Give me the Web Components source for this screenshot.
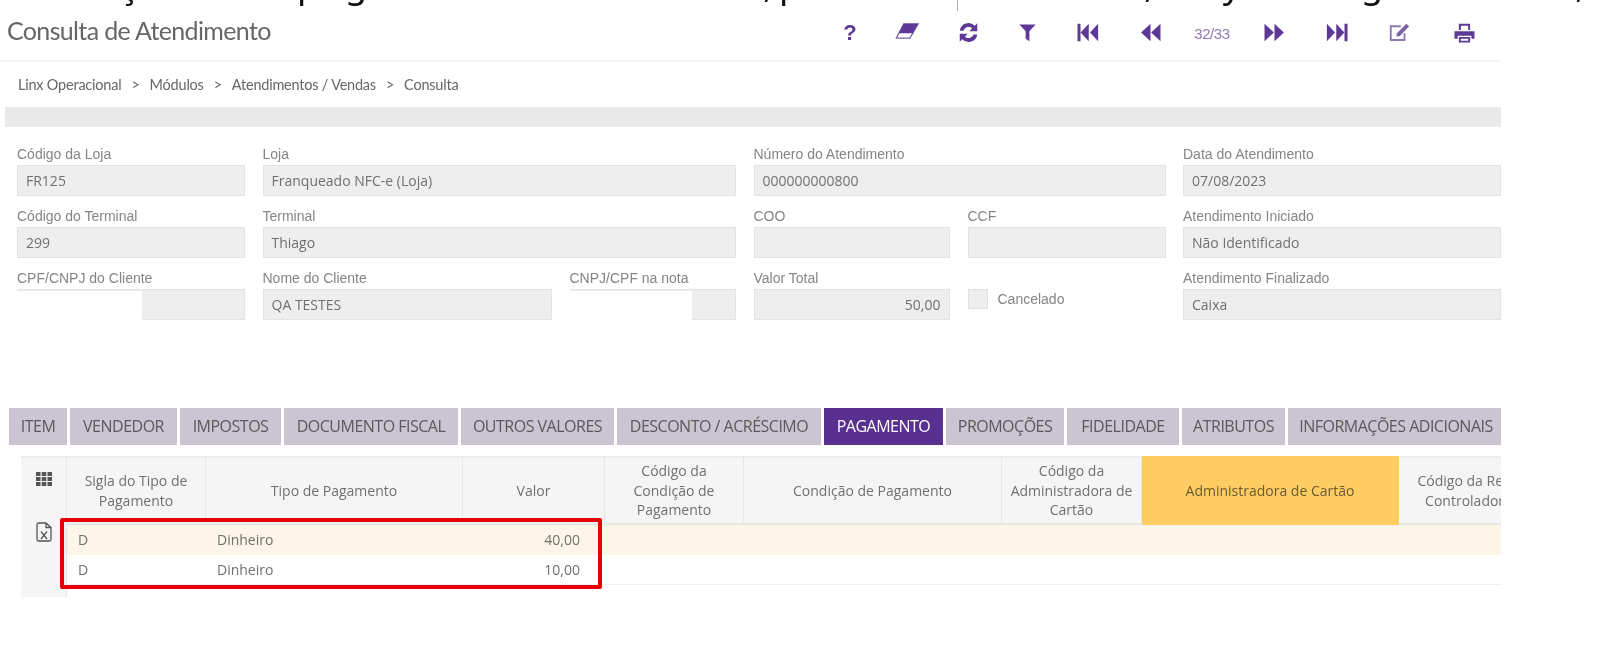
<!DOCTYPE html>
<html lang="pt-BR">
<head>
<meta charset="utf-8">
<title>Consulta de Atendimento</title>
<style>
  html, body { margin: 0; background: #fff; }
  body { width: 1612px; height: 645px; overflow: hidden; font-family: "Liberation Sans", sans-serif; filter: blur(.4px); }
</style>
</head>
<body>
<slide-strip></slide-strip>
<page-header title="Consulta de Atendimento"></page-header>
<bread-crumb path="Linx Operacional|Módulos|Atendimentos / Vendas|Consulta"></bread-crumb>
<grey-bar></grey-bar>
<attendance-form>
  <form-field label="Código da Loja" value="FR125"></form-field>
  <form-field label="Loja" value="Franqueado NFC-e (Loja)"></form-field>
  <form-field label="Número do Atendimento" value="000000000800"></form-field>
  <form-field label="Data do Atendimento" value="07/08/2023"></form-field>

  <form-field label="Código do Terminal" value="299"></form-field>
  <form-field label="Terminal" value="Thiago"></form-field>
  <field-pair style="--cols: 196px 198px">
    <form-field label="COO" value=""></form-field>
    <form-field label="CCF" value=""></form-field>
  </field-pair>
  <form-field label="Atendimento Iniciado" value="Não Identificado"></form-field>

  <form-field label="CPF/CNPJ do Cliente" blank="125"></form-field>
  <field-pair style="--cols: 289px 166.500px">
    <form-field label="Nome do Cliente" value="QA TESTES"></form-field>
    <form-field label="CNPJ/CPF na nota" blank="122"></form-field>
  </field-pair>
  <field-pair style="--cols: 196px 198px">
    <form-field label="Valor Total" value="50,00" numeric></form-field>
    <check-field label="Cancelado"></check-field>
  </field-pair>
  <form-field label="Atendimento Finalizado" value="Caixa"></form-field>
</attendance-form>
<tab-bar active="PAGAMENTO"></tab-bar>
<data-grid></data-grid>

<script>
// cut-off line of the slide above the screenshot, only the descenders show
class SlideStrip extends HTMLElement {
    constructor() {
        super();
        this.attachShadow({ mode: 'open' });
        const glyphs = [['ç', 118], ['p', 297], ['g', 345], [',', 758], ['p', 779], [',', 1139], ['y', 1222], ['g', 1361], [',', 1570]];
        let x = 0;
        let html = '';
        glyphs.forEach(([ch, at]) => {
            html += `<span style="margin-left:${at - x}px">${ch}</span>`;
            x = at + 20;
        });
        this.shadowRoot.innerHTML = `
      <style>
        :host { display: block; height: 11px; overflow: hidden; position: relative; }
        .line { display: flex; margin-top: -37px; height: 42px;
                font: 36px/42px "Noto Sans", sans-serif; color: #111; }
        span { width: 20px; text-align: center; flex: none; }
        i { position: absolute; left: 957px; top: 0; width: 1px; height: 11px; background: #aaa; }
      </style>
      <div class="line">${html}</div>
      <i></i>
    `;
    }
}

const ICONS = {
    eraser: '<path d="M7 3h11.500l-6.500 11.500H1z" fill="none" stroke="#7b62a8" stroke-width="1"/><path d="M7 3h11.500l-4.200 7.500H3z"/>',
    refresh: '<path d="M3 8.500A7 7 0 0 1 15 4.600L17 2.600V9h-6.400l2.300-2.300A4.200 4.200 0 0 0 6 8.500z"/><path d="M17 11.500A7 7 0 0 1 5 15.400L3 17.400V11h6.400l-2.300 2.300A4.200 4.200 0 0 0 14 11.500z"/>',
    filter: '<path d="M3.500 3.500h13l-5 5.500v8l-3-2V9z"/>',
    first: '<path d="M2 3h2.400v14H2zM11 3v14l-6.500-7zM18.500 3v14L12 10z"/>',
    prev: '<path d="M10 3v14L2.500 10zM18 3v14l-7.500-7z"/>',
    next: '<path d="M10 3v14l7.500-7zM2 3v14l7.500-7z"/>',
    last: '<path d="M18 3h-2.400v14H18zM9 3v14l6.500-7zM1.500 3v14L8 10z"/>',
    edit: '<path d="M14 10.500V16H3V5h8" fill="none" stroke="#8d78b0" stroke-width="1.500"/><path fill="#7b62a8" d="M8 10.500 15.500 3l2.200 2.200L10.200 12.700 7.500 13.300z"/>',
    print: '<path d="M5.500 8V3h9v5h-1.600V4.500H7.100V8z"/><path d="M2 9h16v6h-2.500v-2.500h-11V15H2z"/><path d="M5.500 13.500h9V18h-9zM7 15v1.500h6V15z" fill-rule="evenodd"/>'
};

class PageHeader extends HTMLElement {
    constructor() {
        super();
        this.attachShadow({ mode: 'open' });
        const tools = ['?', 'eraser', 'refresh', 'filter', 'first', 'prev', '32/33', 'next', 'last', 'edit', 'print'];
        const cells = tools.map(name => {
            if (name === '?') return `<b>?</b>`;
            if (name === '32/33') return `<em>32/33</em>`;
            return `<svg viewBox="0 0 20 20" width="25" height="25" fill="currentColor">${ICONS[name]}</svg>`;
        }).map(c => `<div class="tool">${c}</div>`).join('');
        this.shadowRoot.innerHTML = `
      <style>
        :host { display: block; width: 1501px; height: 51px; box-sizing: border-box; border-bottom: 2px solid #f3f3f3; }
        .row { display: flex; justify-content: space-between; height: 38px; padding-left: 7px; align-items: center; }
        h1 { margin: 0; font: 400 25px "Lato", sans-serif; letter-spacing: -.65px; color: #666; }
        .tools { display: grid; grid-template-columns: 56px 58px 64px 54px 66px 60px 64px 60px 66px 58px 73px; color: #5e3896; margin-top: 5px; }
        .tool { display: flex; justify-content: center; align-items: center; height: 22px; }
        b { font: 700 22px "Liberation Sans", sans-serif; }
        em { font: 400 15px "Liberation Sans", sans-serif; letter-spacing: -.4px; color: #8d78b0; padding-top: 2px; }
      </style>
      <div class="row">
        <h1>${this.getAttribute('title')}</h1>
        <div class="tools">${cells}</div>
      </div>
    `;
    }
}

class BreadCrumb extends HTMLElement {
    constructor() {
        super();
        this.attachShadow({ mode: 'open' });
        const parts = this.getAttribute('path').split('|');
        this.shadowRoot.innerHTML = `
      <style>
        :host { display: flex; align-items: center; height: 45px; padding-left: 18px; gap: 10px;
                font: 14.500px "Lato", sans-serif; letter-spacing: -.22px; color: #666; }
      </style>
      ${parts.map(p => `<span>${p}</span>`).join('<span>&gt;</span>')}
    `;
    }
}

class GreyBar extends HTMLElement {
    constructor() {
        super();
        this.attachShadow({ mode: 'open' });
        this.shadowRoot.innerHTML = `
      <style>
        :host { display: block; margin-left: 5px; width: 1496px; height: 20px; background: #e9e9e9; }
      </style>
    `;
    }
}

class AttendanceForm extends HTMLElement {
    constructor() {
        super();
        this.attachShadow({ mode: 'open' });
        this.shadowRoot.innerHTML = `
      <style>
        :host { display: grid; grid-template-columns: 228px 473.500px 412px 318px; column-gap: 17.500px; row-gap: 11px;
                grid-auto-rows: 51px; padding: 18px 0 0 17px; width: 1484px; box-sizing: border-box; }
      </style>
      <slot></slot>
    `;
    }
}

class FieldPair extends HTMLElement {
    constructor() {
        super();
        this.attachShadow({ mode: 'open' });
        this.shadowRoot.innerHTML = `
      <style>
        :host { display: grid; grid-template-columns: var(--cols); column-gap: 18px; }
      </style>
      <slot></slot>
    `;
    }
}

class FormField extends HTMLElement {
    constructor() {
        super();
        this.attachShadow({ mode: 'open' });
        const blank = this.getAttribute('blank');
        const align = this.hasAttribute('numeric') ? 'right' : 'left';
        const box = blank
            ? `<div class="box split"><div class="white" style="width:${blank}px"></div></div>`
            : `<div class="box" style="text-align:${align}">${this.getAttribute('value') || ''}</div>`;
        this.shadowRoot.innerHTML = `
      <style>
        :host { display: block; }
        label { display: block; height: 20px; font: 14px/18px "Liberation Sans", sans-serif; color: #858585; white-space: nowrap; }
        .box { height: 31px; box-sizing: border-box; background: #eee; border: 1px solid #e3e3e3; padding: 0 8px;
               font: 14px/29px "Open Sans", sans-serif; color: #707070; }
        .split { padding: 0; border-left: 0; position: relative; }
        .white { height: 31px; margin-top: 1px; background: #fff; }
      </style>
      <label>${this.getAttribute('label')}</label>
      ${box}
    `;
    }
}

class CheckField extends HTMLElement {
    constructor() {
        super();
        this.attachShadow({ mode: 'open' });
        this.shadowRoot.innerHTML = `
      <style>
        :host { display: flex; align-items: flex-start; gap: 10px; padding-top: 20px; font: 14px/20px "Liberation Sans", sans-serif; color: #858585; }
        i { width: 20px; height: 20px; box-sizing: border-box; background: #eee; border: 1px solid #e0e0e0; flex: none; }
      </style>
      <i></i><span>${this.getAttribute('label')}</span>
    `;
    }
}

class TabBar extends HTMLElement {
    constructor() {
        super();
        this.attachShadow({ mode: 'open' });
        const tabs = [['ITEM', 58], ['VENDEDOR', 107], ['IMPOSTOS', 101], ['DOCUMENTO FISCAL', 174], ['OUTROS VALORES', 153], ['DESCONTO / ACRÉSCIMO', 204],
            ['PAGAMENTO', 119], ['PROMOÇÕES', 118], ['FIDELIDADE', 112], ['ATRIBUTOS', 103], ['INFORMAÇÕES ADICIONAIS', 216]];
        const active = this.getAttribute('active');
        this.shadowRoot.innerHTML = `
      <style>
        :host { display: flex; gap: 3px; margin: 88px 0 0 9px; width: 1492px; height: 37px; overflow: hidden; }
        div { flex: none; background: #cbc4d3; color: #5a5a5a; text-align: center; white-space: nowrap;
              font: 16px/37px "Open Sans", sans-serif; letter-spacing: -.5px; }
        .on { background: #59308f; color: #fff; }
      </style>
      ${tabs.map(([t, w]) => `<div class="${t === active ? 'on' : ''}" style="width:${w}px">${t}</div>`).join('')}
    `;
    }
}

class DataGrid extends HTMLElement {
    constructor() {
        super();
        this.attachShadow({ mode: 'open' });
        const cols = [
            ['Sigla do Tipo de<br>Pagamento', 139],
            ['Tipo de Pagamento', 257],
            ['Valor', 142],
            ['Código da<br>Condição de<br>Pagamento', 139],
            ['Condição de Pagamento', 258],
            ['Código da<br>Administradora de<br>Cartão', 140],
            ['Administradora de Cartão', 257],
            ['Código da Rede<br>Controladora', 140]
        ];
        const rows = [['D', 'Dinheiro', '40,00'], ['D', 'Dinheiro', '10,00']];
        const head = cols.map(([t], i) => `<div class="th${i === 6 ? ' sorted' : ''}">${t}</div>`).join('');
        const body = rows.map((r, ri) => cols.map((c, i) => {
            const cls = `td${ri === 0 ? ' odd' : ''}${i === 2 ? ' num' : ''}`;
            return `<div class="${cls}">${r[i] || ''}</div>`;
        }).join('')).join('');
        this.shadowRoot.innerHTML = `
      <style>
        :host { display: flex; position: relative; margin: 11px 0 0 21px; width: 1480px; height: 141px;
                font: 14px "Open Sans", sans-serif; color: #707070; }
        .gutter { width: 46px; flex: none; box-sizing: border-box; background: #f5f5f5; border-top: 2px solid #ebebeb; border-right: 1px solid #e6e6e6;
                  display: flex; flex-direction: column; align-items: center; color: #555; padding-top: 14px; gap: 36px; }
        .main { flex: 1; overflow: hidden; }
        .table { display: grid; width: max-content; grid-template-columns: ${cols.map(c => c[1] + 'px').join(' ')}; grid-template-rows: 69px 30px 30px; }
        .th { display: flex; align-items: center; justify-content: center; text-align: center; line-height: 19.500px; background: #f5f5f5; white-space: nowrap;
              border-top: 2px solid #ebebeb; border-bottom: 2px solid #e6e6e6; border-right: 1px solid #e6e6e6; box-sizing: border-box; }
        .sorted { background: #fdcd63; border-color: #fdcd63; color: #6b5a30; }
        .td { padding: 0 11px; line-height: 29px; box-sizing: border-box; }
        .odd { background: #fdf6e8; }
        .td:not(.odd) { border-bottom: 1px solid #f0f0f0; }
        .num { text-align: right; padding-right: 25px; }
        .mark { position: absolute; left: 39px; top: 62px; width: 542px; height: 71px; box-sizing: border-box; border: 4px solid #e60000; border-radius: 2px; }
      </style>
      <div class="gutter">
        <svg viewBox="0 0 16 14" width="16" height="14" fill="currentColor"><path d="M0 0h4.500v4H0zM5.700 0h4.600v4H5.700zM11.500 0H16v4h-4.500zM0 5h4.500v4H0zM5.700 5h4.600v4H5.700zM11.500 5H16v4h-4.500zM0 10h4.500v4H0zM5.700 10h4.600v4H5.700zM11.500 10H16v4h-4.500z"/></svg>
        <svg viewBox="0 0 16 20" width="16" height="20" fill="none" stroke="currentColor" stroke-width="1.300"><path d="M2.500 1h7.500L15 5.500V17.500a1.500 1.500 0 0 1-1.500 1.500h-11A1.500 1.500 0 0 1 1 17.500V2.500A1.500 1.500 0 0 1 2.500 1zM10 1v4.500H15"/><path d="M5 9.500 11 17M11 9.500 5 17"/></svg>
      </div>
      <div class="main"><div class="table">${head}${body}</div></div>
      <div class="mark"></div>
    `;
    }
}

customElements.define('slide-strip', SlideStrip);
customElements.define('page-header', PageHeader);
customElements.define('bread-crumb', BreadCrumb);
customElements.define('grey-bar', GreyBar);
customElements.define('attendance-form', AttendanceForm);
customElements.define('field-pair', FieldPair);
customElements.define('form-field', FormField);
customElements.define('check-field', CheckField);
customElements.define('tab-bar', TabBar);
customElements.define('data-grid', DataGrid);
</script>
</body>
</html>
